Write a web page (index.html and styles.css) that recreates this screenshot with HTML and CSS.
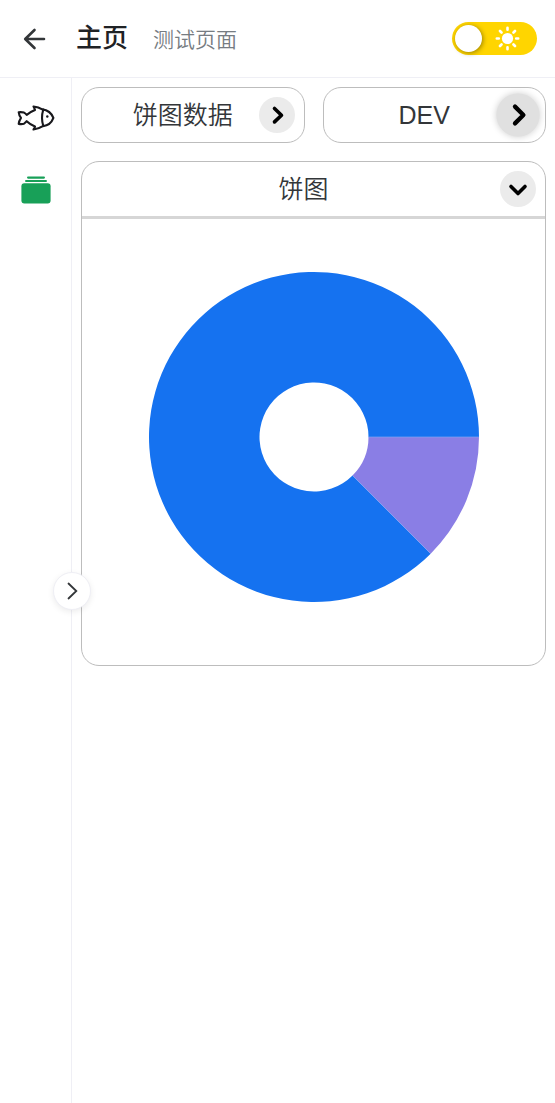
FILE: index.html
```html
<!DOCTYPE html>
<html lang="zh-CN">
<head>
<meta charset="utf-8">
<meta name="viewport" content="width=device-width, initial-scale=1">
<title>主页</title>
<link rel="stylesheet" href="styles.css">
</head>
<body>
<header class="topbar">
  <button class="back" type="button" aria-label="返回">
    <svg width="24" height="24" viewBox="0 0 24 24" fill="none" stroke="#333639" stroke-width="2.6" stroke-linecap="round" stroke-linejoin="round"><path d="M12.500 3 3.200 12l9.300 9M3.500 12h18.500"/></svg>
  </button>
  <div class="heading">
    <h1 class="title">主页</h1>
    <span class="subtitle">测试页面</span>
  </div>
  <label class="theme">
    <input class="theme-input" type="checkbox" role="switch" aria-label="主题">
    <svg class="sun" width="26" height="26" viewBox="0 0 26 26" stroke="#fff" stroke-width="2.6" stroke-linecap="round"><circle cx="12.500" cy="12.500" r="5.600" fill="#fff" stroke="none"/><path d="M12.500 1.800v2M12.500 21.200v2M1.800 12.500h2M21.200 12.500h2M5 5l1.500 1.500M18.500 18.500l1.500 1.500M5 20l1.500-1.500M18.500 6.500l1.500-1.500"/></svg>
  </label>
</header>
<div class="layout">
  <aside class="sidebar">
    <nav class="menu">
      <a class="menu-item" href="#fish" aria-label="鱼">
        <svg width="38" height="28" viewBox="0 0 38 28" fill="none" stroke="#18181c" stroke-width="2.1" stroke-linecap="round" stroke-linejoin="round"><path d="M1.700 8.200c2-.2 3.800-.1 5.300.4 1 .5 1.900 1.300 2.700 2.200 2.500-1.900 5.200-3.500 8.300-4.700-.3-1.300-.8-2.400-1.500-3.600 3.300.3 6.200 1.200 8.700 2.900 5.600.7 9.400 3.900 11.200 8.500-1.700 4.700-5.300 7.700-10.500 8.300-2.700 1.700-5.900 2.800-9.400 3.300.8-1 1.300-2 1.500-3-3.100-1.200-5.800-2.900-8.300-5.300-.8 1-1.700 1.900-2.700 2.500-1.600.5-3.300.5-5.300.2.200-2.100 1-4 2.300-6-1.300-1.600-2.100-3.500-2.300-5.700z"/><path d="M26.300 5.500c-1.700 5.500-1.700 11 0 16.500"/><circle cx="30.300" cy="12.500" r="1.200" fill="#18181c" stroke="none"/></svg>
      </a>
      <a class="menu-item" href="#albums" aria-label="图表" aria-current="page">
        <svg width="30" height="28" viewBox="0 0 30 28" fill="#18a058"><rect x="6" y="0.500" width="18" height="2.200" rx="1.100"/><rect x="4" y="3.900" width="22" height="2.200" rx="1.100"/><rect x="0.400" y="7.300" width="29.200" height="20.200" rx="3"/></svg>
      </a>
    </nav>
    <button class="expand" type="button" aria-label="展开">
      <svg width="20" height="20" viewBox="0 0 20 20" fill="none" stroke="#333639" stroke-width="1.800" stroke-linecap="round"><path d="m6.500 2.500 7.800 7.500-7.800 7.500"/></svg>
    </button>
  </aside>
  <main class="content">
    <section class="card">
      <div class="card-head">
        <h2 class="card-title">饼图数据</h2>
        <button class="round" type="button" aria-label="展开饼图数据">
          <svg width="36" height="36" viewBox="0 0 36 36"><path d="m15.500 11.500 7 6.700-7 6.700"/></svg>
        </button>
      </div>
    </section>
    <section class="card">
      <div class="card-head">
        <h2 class="card-title">DEV</h2>
        <button class="round round-active" type="button" aria-label="展开 DEV">
          <svg width="36" height="36" viewBox="0 0 36 36"><path d="m15.500 11 7 7-7 7"/></svg>
        </button>
      </div>
    </section>
    <section class="card card-wide">
      <div class="card-head card-head-open">
        <h2 class="card-title">饼图</h2>
        <button class="round" type="button" aria-label="收起饼图">
          <svg width="36" height="36" viewBox="0 0 36 36"><path d="m11 15.500 7 7 7-7"/></svg>
        </button>
      </div>
      <div class="chart">
        <svg class="pie" viewBox="0 0 330 330" role="img" aria-label="饼图">
          <path fill="#1572f0" d="M330 165A165 165 0 1 0 281.670 281.670L203.540 203.540A54.500 54.500 0 1 1 219.500 165Z"/>
          <path fill="#8a7ee5" d="M330 165A165 165 0 0 1 281.670 281.670L203.540 203.540A54.500 54.500 0 0 0 219.500 165Z"/>
          <path fill="none" stroke="#7fa4f4" stroke-width="0.700" d="M330 165H219.500M281.670 281.670 203.540 203.540"/>
        </svg>
      </div>
    </section>
  </main>
</div>
</body>
</html>
```
FILE: styles.css
```css
* {
  box-sizing: border-box;
}

body {
  margin: 0;
  min-height: 100vh;
  display: flex;
  flex-direction: column;
  background: #fff;
  color: #333639;
  font-family: "Liberation Sans", "Noto Sans CJK SC", sans-serif;
}

button {
  display: flex;
  align-items: center;
  justify-content: center;
  padding: 0;
  border: 0;
  cursor: pointer;
}

h1,
h2 {
  margin: 0;
}

.topbar {
  display: flex;
  align-items: center;
  min-height: 78px;
  padding: 0 18px 0 22px;
  border-bottom: 1px solid #efeff5;
}

.back {
  background: none;
}

.heading {
  flex: 1;
  display: flex;
  align-items: baseline;
  gap: 25px;
  margin-left: 30px;
}

.title {
  font-size: 26px;
  line-height: 36px;
  font-weight: 500;
  color: #1f2225;
}

.subtitle {
  font-size: 21px;
  line-height: 36px;
  font-weight: 350;
  color: #767c82;
}

.theme {
  display: flex;
  align-items: center;
  justify-content: space-between;
  width: 85px;
  height: 33px;
  padding: 0 16px 0 3px;
  border-radius: 17px;
  background: #ffd500;
  cursor: pointer;
}

.theme-input {
  appearance: none;
  width: 27px;
  height: 27px;
  margin: 0;
  border-radius: 50%;
  background: #fff;
  box-shadow: 1px 1px 5px rgba(0, 0, 0, 0.4);
}

.layout {
  flex: 1;
  display: flex;
}

.sidebar {
  position: relative;
  flex: 0 0 72px;
  border-right: 1px solid #efeff5;
}

.menu {
  display: flex;
  flex-direction: column;
  padding-top: 4px;
}

.menu-item {
  display: flex;
  align-items: center;
  justify-content: center;
  height: 72px;
}

.expand {
  position: absolute;
  top: 50%;
  right: -20px;
  width: 38px;
  height: 38px;
  margin-top: -19px;
  border: 1px solid #efeff5;
  border-radius: 50%;
  background: #fff;
  box-shadow: 0 2px 6px rgba(0, 0, 0, 0.08);
}

.content {
  flex: 1;
  display: grid;
  grid-template-columns: 1fr 1fr;
  align-content: start;
  gap: 18px;
  padding: 9px;
}

.card {
  border: 1px solid #bdbdbd;
  border-radius: 18px;
}

.card-wide {
  grid-column: 1 / -1;
}

.card-head {
  display: flex;
  align-items: center;
  height: 54px;
  padding: 0 9px 0 25px;
}

.card-head-open {
  height: 57px;
  border-bottom: 3px solid #d6d6d6;
}

.card-title {
  flex: 1;
  text-align: center;
  font-size: 25px;
  line-height: 36px;
  font-weight: 350;
}

.round {
  width: 36px;
  height: 36px;
  border-radius: 50%;
  background: #ebebeb;
}

.round path {
  fill: none;
  stroke: #000;
  stroke-width: 3.6;
  stroke-linecap: round;
  stroke-linejoin: round;
}

.round-active {
  background: #e0e0e0;
  box-shadow: 0 0 6px rgba(0, 0, 0, 0.2);
  transform: scale(1.2);
}

.chart {
  display: flex;
  justify-content: center;
  padding: 53px 20px 63px;
}

.pie {
  width: 100%;
  max-width: 330px;
  aspect-ratio: 1;
  overflow: visible;
}
```
